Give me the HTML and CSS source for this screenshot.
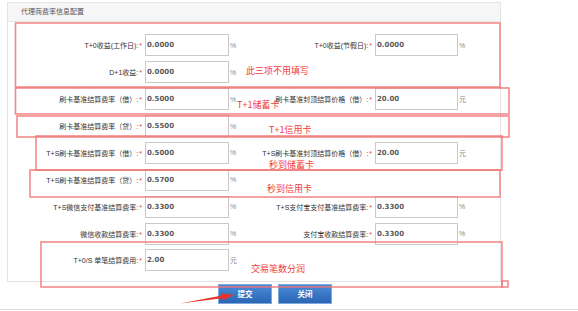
FILE: index.html
```html
<!DOCTYPE html>
<html lang="zh-CN">
<head>
<meta charset="utf-8">
<title>代理商费率信息配置</title>
<link rel="stylesheet" href="styles.css">
</head>
<body>
<div class="page">
  <div class="panel">
    <div class="panel-head">代理商费率信息配置</div>
    <div class="form">
      <div class="row">
        <div class="lbl">T+0收益(工作日):<i>*</i></div><div class="fld"><input class="inp" type="text" value="0.0000"></div><div class="unit">%</div>
        <div class="lbl">T+0收益(节假日):<i>*</i></div><div class="fld"><input class="inp inp2" type="text" value="0.0000"></div><div class="unit">%</div>
      </div>
      <div class="row">
        <div class="lbl">D+1收益:<i>*</i></div><div class="fld"><input class="inp" type="text" value="0.0000"></div><div class="unit">%</div>
      </div>
      <div class="row">
        <div class="lbl">刷卡基准结算费率（借）:<i>*</i></div><div class="fld"><input class="inp" type="text" value="0.5000"></div><div class="unit">%</div>
        <div class="lbl">刷卡基准封顶结算价格（借）:<i>*</i></div><div class="fld"><input class="inp inp2" type="text" value="20.00"></div><div class="unit">元</div>
      </div>
      <div class="row">
        <div class="lbl">刷卡基准结算费率（贷）:<i>*</i></div><div class="fld"><input class="inp" type="text" value="0.5500"></div><div class="unit">%</div>
      </div>
      <div class="row">
        <div class="lbl">T+S刷卡基准结算费率（借）:<i>*</i></div><div class="fld"><input class="inp" type="text" value="0.5000"></div><div class="unit">%</div>
        <div class="lbl">T+S刷卡基准封顶结算价格（借）:<i>*</i></div><div class="fld"><input class="inp inp2" type="text" value="20.00"></div><div class="unit">元</div>
      </div>
      <div class="row">
        <div class="lbl">T+S刷卡基准结算费率（贷）:<i>*</i></div><div class="fld"><input class="inp" type="text" value="0.5700"></div><div class="unit">%</div>
      </div>
      <div class="row">
        <div class="lbl">T+S微信支付基准结算费率:<i>*</i></div><div class="fld"><input class="inp" type="text" value="0.3300"></div><div class="unit">%</div>
        <div class="lbl">T+S支付宝支付基准结算费率:<i>*</i></div><div class="fld"><input class="inp inp2" type="text" value="0.3300"></div><div class="unit">%</div>
      </div>
      <div class="row">
        <div class="lbl">微信收款结算费率:<i>*</i></div><div class="fld"><input class="inp" type="text" value="0.3300"></div><div class="unit">%</div>
        <div class="lbl">支付宝收款结算费率:<i>*</i></div><div class="fld"><input class="inp inp2" type="text" value="0.3300"></div><div class="unit">%</div>
      </div>
      <div class="row">
        <div class="lbl">T+0/S 单笔结算费用:<i>*</i></div><div class="fld"><input class="inp" type="text" value="2.00"></div><div class="unit">元</div>
      </div>
    </div>
  </div>
  <div class="actions">
    <button class="btn" type="button">提交</button>
    <button class="btn" type="button">关闭</button>
  </div>
  <div class="foot-line"></div>
</div>

<svg class="marks" width="578" height="311" viewBox="0 0 578 311" xmlns="http://www.w3.org/2000/svg">
  <g fill="none" stroke="#f07676" stroke-width="1.6" stroke-opacity="0.85">
    <rect x="15.5" y="23" width="484.5" height="64"/>
    <rect x="15.5" y="88" width="493.5" height="26"/>
    <rect x="17" y="116" width="492" height="21"/>
    <rect x="36" y="136" width="466" height="34"/>
    <rect x="30" y="170" width="470" height="27"/>
    <rect x="41" y="242" width="461" height="45"/>
    <rect x="502" y="281" width="6" height="6"/>
  </g>
  <polygon fill="#e8322c" points="180,303.5 221.9,295.6 221.6,293.2 234,295 222.6,300.6 222.3,298.2"/>
</svg>

<div class="note n1">此三项不用填写</div>
<div class="note n2">T+1储蓄卡</div>
<div class="note n3">T+1信用卡</div>
<div class="note n4">秒到储蓄卡</div>
<div class="note n5">秒到信用卡</div>
<div class="note n6">交易笔数分润</div>
</body>
</html>
```

FILE: styles.css
```css
html, body {
  margin: 0;
  padding: 0;
  background: #fff;
}
body {
  position: relative;
  width: 578px;
  height: 311px;
  overflow: hidden;
  font-family: "Liberation Sans", "Noto Sans CJK SC", sans-serif;
  color: #333;
}
.page {
  padding-top: 2px;
}
.panel {
  margin-left: 7px;
  width: 494px;
  box-sizing: border-box;
  border: 1px solid #e3e3e3;
  background: #fff;
}
.panel-head {
  height: 18px;
  line-height: 18px;
  padding-left: 13px;
  font-size: 7px;
  color: #555;
  background: #f6f6f6;
  border-bottom: 1px solid #e6e6e6;
}
.form {
  padding: 10px 0 7px 0;
}
.row {
  display: grid;
  grid-template-columns: 137px 84px 22px 124px 83px 1fr;
  height: 26.875px;
  align-items: center;
}
.lbl {
  text-align: right;
  padding-right: 3px;
  font-size: 7px;
  white-space: nowrap;
  color: #333;
}
.lbl i {
  font-style: normal;
  color: #e53a3a;
  margin-left: 1px;
}
.fld {
  display: flex;
  align-items: center;
}
.inp {
  width: 84px;
  height: 22px;
  box-sizing: border-box;
  border: 1px solid #c9c9c9;
  padding: 0 1px;
  margin: 0;
  font-family: "DejaVu Sans", sans-serif;
  font-weight: bold;
  font-size: 7px;
  color: #5a5a5a;
  background: #fff;
  outline: none;
}
.inp2 {
  width: 83px;
}
.unit {
  font-size: 7px;
  color: #888;
  padding-left: 1px;
}
.actions {
  display: flex;
  gap: 6px;
  padding-left: 218px;
  margin-top: 2px;
}
.btn {
  width: 54px;
  height: 20px;
  margin: 0;
  padding: 0;
  box-sizing: border-box;
  border: 1px solid #7fa9dc;
  background: linear-gradient(#4a8bd6, #2a66b4);
  color: #fff;
  font-family: "Noto Sans CJK SC", sans-serif;
  font-size: 7.5px;
  font-weight: bold;
}
.foot-line {
  margin-top: 5px;
  border-top: 1px solid #dcdcdc;
}
.marks {
  position: absolute;
  left: 0;
  top: 0;
  pointer-events: none;
}
.note {
  position: absolute;
  font-family: "Noto Sans CJK SC", sans-serif;
  font-size: 9px;
  line-height: 10px;
  color: #f23c3c;
  white-space: nowrap;
}
.n1 { left: 246px; top: 66px; }
.n2 { left: 237px; top: 100px; }
.n3 { left: 269px; top: 125px; }
.n4 { left: 269px; top: 160px; }
.n5 { left: 267px; top: 184px; }
.n6 { left: 251px; top: 264px; }
```
